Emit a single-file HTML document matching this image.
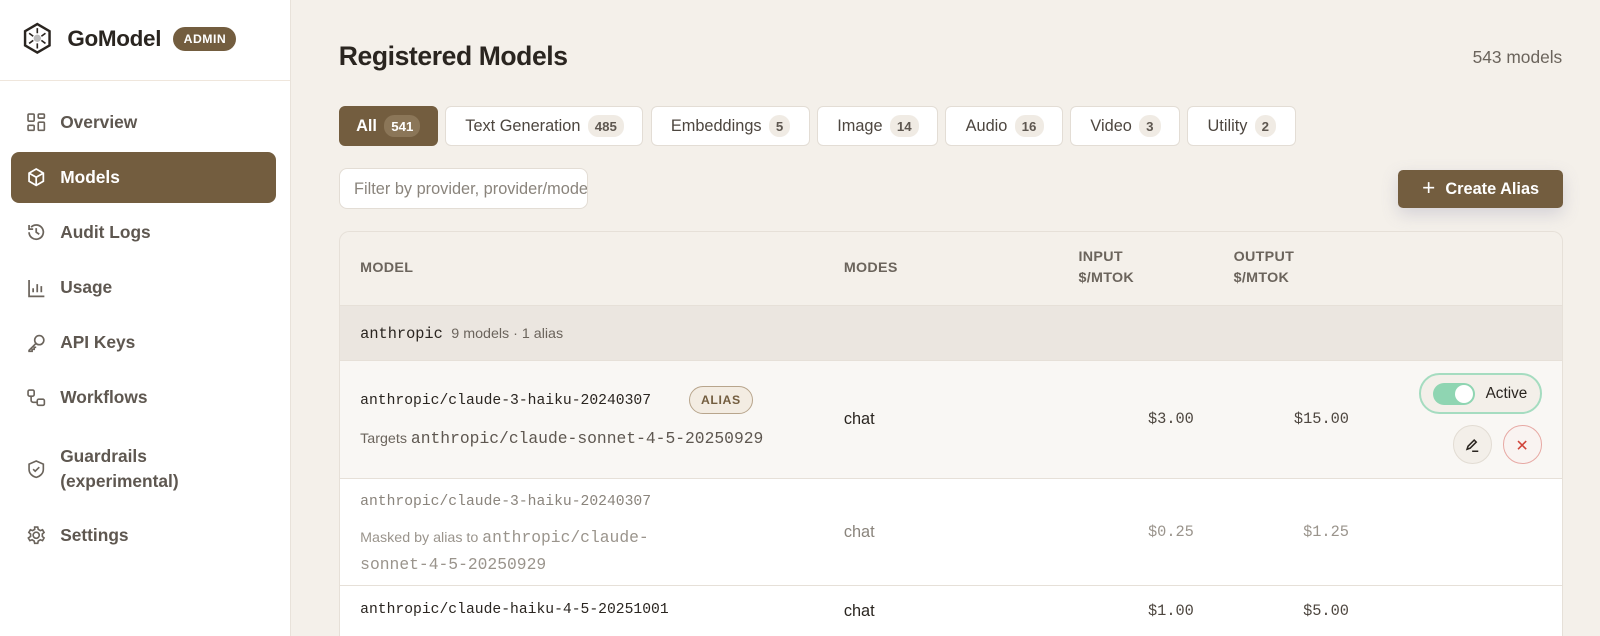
<!DOCTYPE html>
<html><head><meta charset="utf-8">
<style>
html{zoom:1.0204;height:623px;overflow:hidden}
*{box-sizing:border-box;margin:0;padding:0}
body{width:1568px;height:623px;overflow:hidden;background:#f4f0ea;font-family:"Liberation Sans",sans-serif;color:#2a2520;position:relative}
.side{position:absolute;left:0;top:0;width:285px;height:623px;background:#fff;border-right:1px solid #e8e2da}
.logo{position:absolute;left:22px;top:22px;display:flex;align-items:center}
.logo b{font-size:22px;margin-left:14px;letter-spacing:-.3px}
.admin{margin-left:12px;background:#735d3f;color:#fff;font-size:12px;font-weight:bold;border-radius:12px;padding:5px 10px;letter-spacing:.5px}
.sep{position:absolute;top:78px;left:0;right:0;border-top:1px solid #efe6dc}
.nav{position:absolute;left:11px;width:259px;height:50px;display:flex;align-items:center;padding-left:14px;font-size:17px;color:#5e5750;font-weight:bold}
.nav svg{width:20px;height:20px;margin-right:14px;flex:none}
.nav.on{background:#735d3f;color:#fff;border-radius:8px}
h1{position:absolute;left:332px;top:40px;font-size:26px;letter-spacing:-.4px}
.count{position:absolute;right:37px;top:46px;font-size:17px;color:#6b645c}
.tabs{position:absolute;left:332px;top:104px;display:flex;gap:7px}
.tab{height:39px;border:1px solid #e3ddd5;background:#fff;border-radius:6px;display:flex;align-items:center;padding:0 18px 0 19px;font-size:16px;color:#4d463f}
.tab i{font-style:normal;font-size:13px;background:#f0ebe4;border-radius:10px;padding:3px 7px;margin-left:7px;font-weight:bold;color:#5e5750}
.tab.on{background:#735d3f;color:#fff;border-color:#735d3f;font-weight:bold;padding:0 16px}
.tab.on i{background:#8b7658;color:#fff}
.filter{position:absolute;left:332px;top:165px;width:244px;height:40px;background:#fff;border:1px solid #e3ddd5;border-radius:8px;font-size:16px;color:#8a847c;padding:10px 14px;white-space:nowrap;overflow:hidden}
.create{position:absolute;left:1370px;top:167px;width:162px;height:37px;background:#735d3f;color:#fff;border-radius:5px;font-weight:bold;font-size:16px;display:flex;align-items:center;justify-content:center;box-shadow:0 6px 16px rgba(120,120,160,.25)}
.create span{font-weight:normal;font-size:22px;margin-right:10px;margin-top:-3px}
.card{position:absolute;left:332px;top:226px;width:1200px;height:397px;border:1px solid #e6e0d8;border-bottom:none;border-radius:10px 10px 0 0;overflow:hidden;background:#f4f0ea}
.th{position:absolute;font-size:14px;font-weight:bold;color:#6b645c;line-height:21px;letter-spacing:.3px}
.grp{position:absolute;left:0;top:72px;width:100%;height:54px;background:#ebe6e0;border-top:1px solid #e6e0d8}
.row{position:absolute;left:0;width:100%;border-top:1px solid #e6e0d8}
.mono{font-family:"Liberation Mono",monospace}
.a{position:absolute}
.sm{font-size:14px;color:#6b645c}
</style></head><body>
<div class="side">
 <div class="logo">
  <svg width="30" height="32" viewBox="0 0 30 32"><path d="M15 2 L27 9 V23 L15 30 L3 23 V9 Z" fill="none" stroke="#2a2520" stroke-width="2.4"/><circle cx="15" cy="16" r="3.6" fill="#bbb"/><path d="M15 6v5M15 21v5M7 11l4 3M23 11l-4 3M7 21l4-3M23 21l-4-3" stroke="#2a2520" stroke-width="1.6"/></svg>
  <b>GoModel</b><span class="admin">ADMIN</span>
 </div>
 <div class="sep"></div>
 <div class="nav" style="top:95px"><svg viewBox="0 0 20 20" fill="none" stroke="#6b645c" stroke-width="1.6"><rect x="2" y="2" width="6" height="7" rx="1"/><rect x="12" y="2" width="6" height="4" rx="1"/><rect x="2" y="13" width="6" height="5" rx="1"/><rect x="12" y="10" width="6" height="8" rx="1"/></svg>Overview</div>
 <div class="nav on" style="top:149px"><svg viewBox="0 0 20 20" fill="none" stroke="#fff" stroke-width="1.7"><path d="M10 2l7 4v8l-7 4-7-4V6z M3 6l7 4 7-4 M10 10v8"/></svg>Models</div>
 <div class="nav" style="top:203px"><svg viewBox="0 0 20 20" fill="none" stroke="#6b645c" stroke-width="1.7"><path d="M3 10a7 7 0 1 0 2-5 M3 3v4h4 M10 6v4l3 2"/></svg>Audit Logs</div>
 <div class="nav" style="top:257px"><svg viewBox="0 0 20 20" fill="none" stroke="#6b645c" stroke-width="1.7"><path d="M3 2v16h15 M7 14v-4 M11 14V6 M15 14v-6"/></svg>Usage</div>
 <div class="nav" style="top:311px"><svg viewBox="0 0 20 20" fill="none" stroke="#6b645c" stroke-width="1.6"><circle cx="13" cy="7" r="4.5"/><path d="M10 10l-7 7v1h3v-2h2v-2h2"/></svg>API Keys</div>
 <div class="nav" style="top:365px"><svg viewBox="0 0 20 20" fill="none" stroke="#6b645c" stroke-width="1.6"><rect x="2" y="2" width="6" height="6" rx="1.5"/><rect x="11" y="11" width="7" height="6" rx="1.5"/><path d="M5 8v4a2 2 0 0 0 2 2h4"/></svg>Workflows</div>
 <div class="nav" style="top:432px;height:56px;line-height:25px"><svg viewBox="0 0 20 20" fill="none" stroke="#6b645c" stroke-width="1.6"><path d="M10 2l7 3v5c0 4-3 7-7 8-4-1-7-4-7-8V5z M7 10l2 2 4-4"/></svg><span style="margin-top:-18px;display:block;position:relative;top:9px">Guardrails<br>(experimental)</span></div>
 <div class="nav" style="top:500px"><svg viewBox="0 0 20 20" fill="none" stroke="#6b645c" stroke-width="1.6"><circle cx="10" cy="10" r="3"/><path d="M8.5 2h3l.5 2.3 2 1.2 2.2-.8 1.5 2.6-1.7 1.5v2.4l1.7 1.5-1.5 2.6-2.2-.8-2 1.2-.5 2.3h-3l-.5-2.3-2-1.2-2.2.8-1.5-2.6L4.5 11.2V8.8L2.8 7.3l1.5-2.6 2.2.8 2-1.2z"/></svg>Settings</div>
</div>

<h1>Registered Models</h1>
<div class="count">543 models</div>
<div class="tabs">
 <div class="tab on">All<i>541</i></div>
 <div class="tab">Text Generation<i>485</i></div>
 <div class="tab">Embeddings<i>5</i></div>
 <div class="tab">Image<i>14</i></div>
 <div class="tab">Audio<i>16</i></div>
 <div class="tab">Video<i>3</i></div>
 <div class="tab">Utility<i>2</i></div>
</div>
<div class="filter">Filter by provider, provider/model</div>
<div class="create"><span>+</span>Create Alias</div>

<div class="card">
 <div class="th" style="left:20px;top:26px">MODEL</div>
 <div class="th" style="left:494px;top:26px">MODES</div>
 <div class="th" style="left:724px;top:15px">INPUT<br>$/MTOK</div>
 <div class="th" style="left:876px;top:15px">OUTPUT<br>$/MTOK</div>
 <div class="grp"><div class="a" style="left:20px;top:18px"><span class="mono" style="font-size:15px">anthropic</span> <span class="sm">&nbsp;9 models · 1 alias</span></div></div>
 <div class="row" style="top:126px;height:115px;background:#f9f7f4">
  <div class="a mono" style="left:20px;top:31px;font-size:14.4px">anthropic/claude-3-haiku-20240307</div>
  <div class="a" style="left:342px;top:24px;border:1px solid #b8a58c;background:#f3ece2;color:#735d3f;font-size:12px;font-weight:bold;border-radius:14px;padding:6px 11px;letter-spacing:.6px">ALIAS</div>
  <div class="a sm" style="left:20px;top:66px">Targets <span class="mono" style="font-size:16px;color:#5e5750">anthropic/claude-sonnet-4-5-20250929</span></div>
  <div class="a" style="left:494px;top:48px;font-size:16px">chat</div>
  <div class="a mono" style="right:361px;top:48px;font-size:15px;color:#4d463f">$3.00</div>
  <div class="a mono" style="right:209px;top:48px;font-size:15px;color:#4d463f">$15.00</div>
  <div class="a" style="left:1058px;top:12px;width:120px;height:40px;border:2px solid #a5dcc0;border-radius:20px;background:#f3efe9;display:flex;align-items:center;padding-left:11px;font-size:15px">
   <span style="width:42px;height:22px;background:#8fd5b2;border-radius:11px;position:relative;margin-right:10px"><span style="position:absolute;right:2px;top:2px;width:18px;height:18px;background:#fff;border-radius:50%"></span></span>Active</div>
  <div class="a" style="left:1091px;top:63px;width:38px;height:38px;border-radius:50%;border:1px solid #e2dcd3;background:#f3efe9;display:flex;align-items:center;justify-content:center"><svg width="16" height="16" viewBox="0 0 16 16" fill="none" stroke="#2a2520" stroke-width="1.5"><path d="M3 12l1-3 6-6 2 2-6 6z M8 14h6"/></svg></div>
  <div class="a" style="left:1140px;top:63px;width:38px;height:38px;border-radius:50%;border:1px solid #e7a9a4;background:#f9f3f1;display:flex;align-items:center;justify-content:center"><svg width="12" height="12" viewBox="0 0 12 12" stroke="#d0443a" stroke-width="1.5"><path d="M2 2l8 8M10 2l-8 8"/></svg></div>
 </div>
 <div class="row" style="top:241px;height:105px;background:#fff">
  <div class="a mono" style="left:20px;top:15px;font-size:14.4px;color:#8a847c">anthropic/claude-3-haiku-20240307</div>
  <div class="a" style="left:20px;top:46px;font-size:14px;color:#9a948c;line-height:26px;width:330px">Masked by alias to <span class="mono" style="font-size:16px">anthropic/claude-<br>sonnet-4-5-20250929</span></div>
  <div class="a" style="left:494px;top:44px;font-size:16px;color:#8a847c">chat</div>
  <div class="a mono" style="right:361px;top:44px;font-size:15px;color:#9a948c">$0.25</div>
  <div class="a mono" style="right:209px;top:44px;font-size:15px;color:#9a948c">$1.25</div>
 </div>
 <div class="row" style="top:346px;height:51px;background:#fff">
  <div class="a mono" style="left:20px;top:16px;font-size:14.4px">anthropic/claude-haiku-4-5-20251001</div>
  <div class="a" style="left:494px;top:16px;font-size:16px">chat</div>
  <div class="a mono" style="right:361px;top:16px;font-size:15px;color:#4d463f">$1.00</div>
  <div class="a mono" style="right:209px;top:16px;font-size:15px;color:#4d463f">$5.00</div>
 </div>
</div>
</body></html>
